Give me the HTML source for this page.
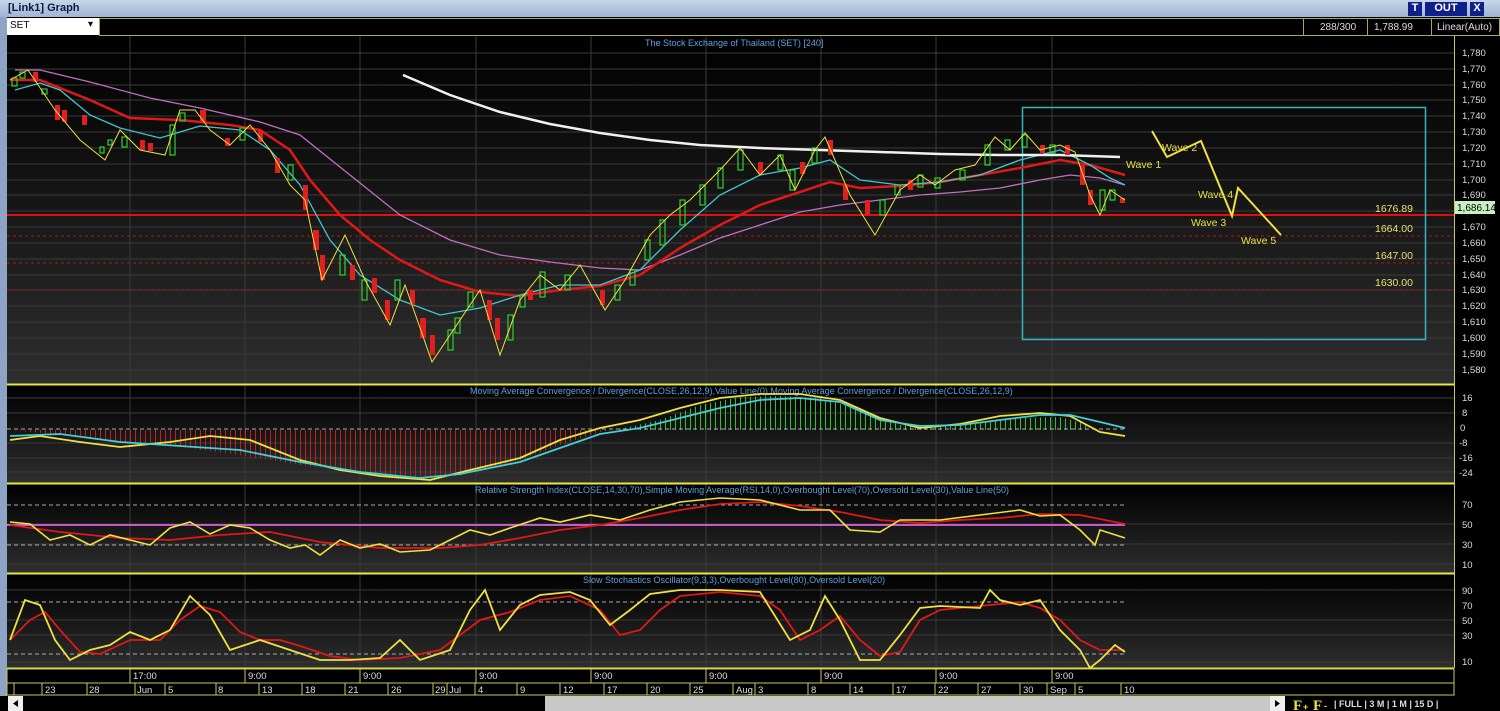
<!DOCTYPE html>
<html><head><meta charset="utf-8"><style>
*{margin:0;padding:0;box-sizing:border-box}
body{width:1500px;height:711px;overflow:hidden;background:#000;font-family:"Liberation Sans",sans-serif;position:relative}
.t{position:absolute;font-size:11px}
</style></head><body>
<div style="position:absolute;left:0;top:0;width:1500px;height:17px;background:linear-gradient(#c7d6ea,#9fb6d3)"></div>
<div class="t" style="left:8px;top:2px;font-weight:bold;color:#0a1a40;font-size:11px">[Link1] Graph</div>
<div style="position:absolute;left:1408px;top:2px;width:14px;height:14px;background:#10208a;color:#fff;font-size:11px;font-weight:bold;text-align:center">T</div>
<div style="position:absolute;left:1425px;top:2px;width:42px;height:14px;background:#10208a;color:#fff;font-size:11px;font-weight:bold;text-align:center">OUT</div>
<div style="position:absolute;left:1470px;top:2px;width:14px;height:14px;background:#10208a;color:#fff;font-size:11px;font-weight:bold;text-align:center">X</div>
<div style="position:absolute;left:0;top:17px;width:7px;height:680px;background:#8ea4c4"></div>
<div style="position:absolute;left:7px;top:18px;width:92px;height:17px;background:#fff;font-size:10px;padding:2px 3px;color:#000">SET<span style="position:absolute;right:6px;top:1px">▾</span></div>
<div style="position:absolute;left:99px;top:18px;width:1401px;height:18px;border:1px solid #a8a860;background:#000"></div>
<div style="position:absolute;left:1303px;top:18px;width:1px;height:18px;background:#a8a860"></div>
<div style="position:absolute;left:1367px;top:18px;width:1px;height:18px;background:#a8a860"></div>
<div style="position:absolute;left:1431px;top:18px;width:1px;height:18px;background:#a8a860"></div>
<div class="t" style="left:1320px;top:22px;color:#ddd;font-size:10px">288/300</div>
<div class="t" style="left:1374px;top:22px;color:#ddd;font-size:10px">1,788.99</div>
<div class="t" style="left:1437px;top:22px;color:#ddd;font-size:10px">Linear(Auto)</div>

<svg style="position:absolute;left:0;top:0" width="1500" height="711" font-family="Liberation Sans, sans-serif">
<defs>
<linearGradient id="g" x1="0" y1="0" x2="0" y2="1"><stop offset="0" stop-color="#000"/><stop offset="1" stop-color="#2e2e2e"/></linearGradient>
<pattern id="pr" width="5" height="10" patternUnits="userSpaceOnUse"><rect x="0" width="1" height="10" fill="#c02020"/></pattern>
<pattern id="pg" width="5" height="10" patternUnits="userSpaceOnUse"><rect x="0" width="1" height="10" fill="#30c030"/></pattern>
</defs>
<rect x="7" y="36" width="1447" height="348" fill="url(#g)"/>
<rect x="7" y="385" width="1447" height="98" fill="url(#g)"/>
<rect x="7" y="484" width="1447" height="89" fill="url(#g)"/>
<rect x="7" y="574" width="1447" height="94" fill="url(#g)"/>
<g stroke="#3a3a3a" stroke-width="1">
<path d="M7 53H1454M7 69H1454M7 85H1454M7 100H1454M7 116H1454M7 132H1454M7 148H1454M7 164H1454M7 180H1454M7 195H1454M7 211H1454M7 227H1454M7 243H1454M7 259H1454M7 275H1454M7 290H1454M7 306H1454M7 322H1454M7 338H1454M7 354H1454M7 370H1454"/>
<path d="M7 398H1454M7 413H1454M7 443H1454M7 458H1454M7 472H1454M7 524H1454M7 544H1454M7 564H1454M7 590H1454M7 620H1454M7 635H1454M7 662H1454"/>
<path d="M130 36V668M245 36V668M360 36V668M476 36V668M591 36V668M706 36V668M821 36V668M936 36V668M1052 36V668"/>
</g>
<g stroke="#e8e840" stroke-width="2"><path d="M7 384.5H1454M7 483.5H1454M7 573.5H1454M7 668.5H1454"/></g>
<path d="M1454.5 36V668" stroke="#c8c860"/>
<g fill="#ddd" font-size="9.5">
<text x="1462" y="56">1,780</text><text x="1462" y="72">1,770</text><text x="1462" y="88">1,760</text><text x="1462" y="103">1,750</text><text x="1462" y="119">1,740</text><text x="1462" y="135">1,730</text><text x="1462" y="151">1,720</text><text x="1462" y="167">1,710</text><text x="1462" y="183">1,700</text><text x="1462" y="198">1,690</text><text x="1462" y="230">1,670</text><text x="1462" y="246">1,660</text><text x="1462" y="262">1,650</text><text x="1462" y="278">1,640</text><text x="1462" y="293">1,630</text><text x="1462" y="309">1,620</text><text x="1462" y="325">1,610</text><text x="1462" y="341">1,600</text><text x="1462" y="357">1,590</text><text x="1462" y="373">1,580</text>
<text x="1462" y="401">16</text><text x="1462" y="416">8</text><text x="1460" y="431">0</text><text x="1459" y="446">-8</text><text x="1459" y="461">-16</text><text x="1459" y="476">-24</text>
<text x="1462" y="508">70</text><text x="1462" y="528">50</text><text x="1462" y="548">30</text><text x="1462" y="568">10</text>
<text x="1462" y="594">90</text><text x="1462" y="609">70</text><text x="1462" y="624">50</text><text x="1462" y="639">30</text><text x="1462" y="665">10</text>
</g>
<rect x="1455" y="201" width="40" height="13" fill="#c8f0c0"/><text x="1457" y="211" font-size="10" fill="#000">1,686.14</text>
<g font-size="9" fill="#5aa0e0">
<text x="645" y="46">The Stock Exchange of Thailand (SET) [240]</text>
<text x="470" y="394">Moving Average Convergence / Divergence(CLOSE,26,12,9),Value Line(0),Moving Average Convergence / Divergence(CLOSE,26,12,9)</text>
<text x="475" y="493">Relative Strength Index(CLOSE,14,30,70),Simple Moving Average(RSI,14,0),Overbought Level(70),Oversold Level(30),Value Line(50)</text>
<text x="583" y="583">Slow Stochastics Oscillator(9,3,3),Overbought Level(80),Oversold Level(20)</text>
</g>
<!-- fib lines -->
<path d="M7 215H1454" stroke="#e01010" stroke-width="2"/>
<g stroke="#b01818" stroke-dasharray="3,3"><path d="M7 236H1454M7 263H1454M7 290H1454"/></g>
<g fill="#e8e070" font-size="10.5"><text x="1375" y="212">1676.89</text><text x="1375" y="232">1664.00</text><text x="1375" y="259">1647.00</text><text x="1375" y="286">1630.00</text></g>
<rect x="1022.5" y="107.5" width="403" height="232" fill="none" stroke="#30b8c0" stroke-width="1.5"/>
<!-- MAs -->
<polyline fill="none" stroke="#c070c0" stroke-width="1.3" points="15,70 40,70 90,82 150,98 200,108 260,122 300,135 350,175 400,215 450,240 500,255 550,262 600,268 640,270 680,255 720,238 760,225 800,212 840,205 880,200 920,195 960,192 1000,188 1040,180 1070,175 1100,178 1125,185"/>
<polyline fill="none" stroke="#e01818" stroke-width="2.5" points="10,80 40,80 90,100 130,118 180,120 230,125 260,130 290,150 310,180 340,215 370,240 400,260 440,280 480,292 520,296 560,290 600,286 640,275 680,248 720,225 760,205 800,192 830,182 860,188 900,186 940,182 980,175 1020,168 1060,160 1090,165 1125,175"/>
<polyline fill="none" stroke="#40c8d0" stroke-width="1.3" points="15,90 40,83 60,90 90,115 120,128 160,138 200,126 240,130 270,150 300,185 330,240 360,275 400,300 440,315 480,308 520,295 560,285 600,285 640,270 680,230 720,195 760,175 800,168 830,160 860,180 900,185 940,182 980,175 1020,160 1060,150 1090,165 1110,178 1125,185"/>
<polyline fill="none" stroke="#f0f0f0" stroke-width="2.5" points="403,75 450,95 500,112 550,124 600,133 650,140 700,145 760,148 820,150 880,152 940,154 1000,155 1060,155 1120,157"/>
<!-- candles -->
<g fill="#e02020"><rect x="33" y="72" width="5" height="10"/><rect x="55" y="105" width="5" height="15"/><rect x="62" y="110" width="5" height="12"/><rect x="82" y="115" width="5" height="10"/><rect x="140" y="140" width="5" height="10"/><rect x="148" y="143" width="5" height="8"/><rect x="200" y="110" width="6" height="12"/><rect x="225" y="138" width="5" height="8"/><rect x="258" y="130" width="5" height="12"/><rect x="275" y="158" width="5" height="15"/><rect x="303" y="185" width="5" height="25"/><rect x="313" y="230" width="6" height="20"/><rect x="320" y="255" width="5" height="25"/><rect x="350" y="265" width="5" height="15"/><rect x="372" y="278" width="5" height="15"/><rect x="385" y="300" width="5" height="20"/><rect x="410" y="290" width="5" height="15"/><rect x="420" y="318" width="6" height="20"/><rect x="430" y="335" width="5" height="20"/><rect x="487" y="300" width="5" height="20"/><rect x="495" y="318" width="5" height="22"/><rect x="528" y="290" width="5" height="10"/><rect x="600" y="290" width="5" height="15"/><rect x="758" y="162" width="5" height="12"/><rect x="800" y="162" width="5" height="12"/><rect x="828" y="140" width="5" height="15"/><rect x="843" y="185" width="5" height="15"/><rect x="865" y="200" width="5" height="15"/><rect x="908" y="180" width="5" height="10"/><rect x="1040" y="145" width="5" height="8"/><rect x="1065" y="145" width="5" height="10"/><rect x="1080" y="165" width="5" height="20"/><rect x="1088" y="190" width="5" height="15"/><rect x="1120" y="198" width="5" height="5"/></g>
<g fill="none" stroke="#30d030" stroke-width="1.2"><rect x="12" y="78" width="5" height="8"/><rect x="20" y="72" width="5" height="6"/><rect x="42" y="89" width="5" height="5"/><rect x="100" y="147" width="4" height="6"/><rect x="108" y="140" width="4" height="5"/><rect x="122" y="137" width="5" height="10"/><rect x="170" y="125" width="5" height="30"/><rect x="180" y="113" width="5" height="8"/><rect x="240" y="128" width="5" height="12"/><rect x="288" y="165" width="5" height="15"/><rect x="340" y="255" width="5" height="20"/><rect x="362" y="280" width="5" height="20"/><rect x="395" y="280" width="5" height="20"/><rect x="448" y="330" width="5" height="20"/><rect x="455" y="318" width="5" height="15"/><rect x="468" y="292" width="5" height="15"/><rect x="508" y="315" width="5" height="25"/><rect x="520" y="295" width="5" height="12"/><rect x="540" y="272" width="5" height="25"/><rect x="565" y="275" width="5" height="15"/><rect x="615" y="285" width="5" height="15"/><rect x="630" y="270" width="5" height="15"/><rect x="645" y="240" width="5" height="20"/><rect x="660" y="220" width="5" height="25"/><rect x="680" y="200" width="5" height="25"/><rect x="700" y="185" width="5" height="20"/><rect x="718" y="168" width="5" height="20"/><rect x="738" y="150" width="5" height="20"/><rect x="778" y="155" width="5" height="15"/><rect x="790" y="170" width="5" height="20"/><rect x="812" y="148" width="5" height="15"/><rect x="880" y="200" width="5" height="15"/><rect x="895" y="185" width="5" height="10"/><rect x="918" y="175" width="5" height="12"/><rect x="935" y="178" width="5" height="10"/><rect x="960" y="170" width="5" height="10"/><rect x="985" y="145" width="5" height="20"/><rect x="1005" y="140" width="5" height="10"/><rect x="1022" y="135" width="5" height="12"/><rect x="1050" y="145" width="5" height="8"/><rect x="1100" y="190" width="5" height="20"/><rect x="1110" y="190" width="5" height="10"/></g>
<polyline fill="none" stroke="#f0e040" stroke-width="1" points="10,80 28,70 55,110 80,140 105,160 120,130 140,150 165,155 180,110 195,110 210,130 230,145 250,125 270,150 290,185 305,200 322,280 345,235 365,280 390,325 405,285 432,362 460,320 480,290 500,355 520,300 540,275 560,290 580,265 605,310 625,280 650,235 670,215 690,200 720,170 740,148 760,175 780,155 795,190 815,150 825,137 850,195 875,235 900,190 920,175 935,185 955,170 975,165 995,137 1010,150 1025,133 1040,150 1060,145 1075,152 1090,195 1100,215 1110,190 1125,200"/>
<polyline fill="none" stroke="#f0e040" stroke-width="2" points="1152,131 1167,157 1201,141 1232,216 1238,188 1281,235"/>
<g fill="#e8e040" font-size="10.5"><text x="1126" y="168">Wave 1</text><text x="1162" y="151">Wave 2</text><text x="1191" y="226">Wave 3</text><text x="1198" y="198">Wave 4</text><text x="1241" y="244">Wave 5</text></g>
<!-- MACD -->
<polygon fill="url(#pr)" points="10,430 60,435 120,442 180,447 240,455 300,465 360,472 420,478 460,476 520,460 560,445 600,432 620,429 620,430 10,430"/>
<polygon fill="url(#pg)" points="620,429 660,420 700,405 740,397 780,396 820,398 860,410 900,425 940,427 980,422 1020,418 1060,417 1090,425 1090,430 620,430"/>
<path d="M7 429H1125" stroke="#aaa" stroke-dasharray="4,3"/>
<polyline fill="none" stroke="#f0e040" stroke-width="1.8" points="10,440 40,436 80,442 120,447 170,442 210,436 250,440 300,460 340,470 380,476 430,480 470,470 520,458 560,440 600,428 640,420 680,408 720,398 760,394 800,394 840,400 880,418 920,428 960,424 1000,416 1040,413 1070,416 1100,432 1125,436"/>
<polyline fill="none" stroke="#40d0d8" stroke-width="1.8" points="10,436 60,434 120,442 180,446 240,450 300,462 360,472 420,478 460,474 520,462 560,448 600,434 640,428 680,418 720,408 760,400 800,398 840,402 880,420 920,426 960,425 1000,420 1040,415 1070,415 1100,422 1125,428"/>
<!-- RSI -->
<g stroke="#aaa" stroke-dasharray="4,3"><path d="M7 505H1125M7 545H1125"/></g>
<path d="M7 525H1125" stroke="#e060e0" stroke-width="1.8"/>
<polyline fill="none" stroke="#e01818" stroke-width="1.8" points="10,525 60,532 120,538 170,540 220,535 270,532 320,542 380,548 440,548 480,545 520,538 560,530 600,525 640,518 680,510 720,504 760,502 800,506 840,512 880,520 920,523 960,520 1000,518 1040,514 1080,515 1125,524"/>
<polyline fill="none" stroke="#f0e040" stroke-width="1.6" points="10,522 30,524 50,540 70,535 90,545 110,535 130,540 150,545 170,528 190,522 210,534 230,525 250,528 270,540 290,548 305,545 320,555 340,540 360,548 380,544 400,552 430,550 450,540 470,530 490,535 510,528 540,518 560,522 590,515 620,520 650,510 680,502 720,498 760,500 800,510 830,510 850,530 880,532 900,520 940,520 980,515 1020,510 1040,516 1060,515 1080,530 1095,545 1100,530 1125,538"/>
<!-- Stoch -->
<g stroke="#aaa" stroke-dasharray="4,3"><path d="M7 602H1125M7 654H1125"/></g>
<polyline fill="none" stroke="#e01818" stroke-width="1.8" points="10,640 30,620 45,612 60,630 80,652 100,654 130,640 160,640 180,620 200,606 220,612 240,632 260,640 280,640 300,646 330,656 360,660 400,658 440,650 460,635 480,620 510,612 540,600 570,596 600,610 620,635 640,630 660,610 680,596 720,592 760,596 780,610 800,640 820,630 840,616 860,640 880,656 900,652 920,620 940,610 980,606 1020,602 1040,608 1060,620 1080,640 1100,650 1125,650"/>
<polyline fill="none" stroke="#f0e040" stroke-width="1.8" points="10,640 25,600 40,605 55,640 70,660 90,650 110,645 130,632 150,640 170,630 190,596 210,615 230,650 260,640 290,650 320,660 350,660 380,658 400,640 420,660 450,650 470,610 485,590 500,630 520,605 540,595 570,592 590,600 610,625 630,610 650,594 680,590 720,590 760,592 790,640 810,630 825,596 840,620 860,660 880,660 900,635 920,608 940,606 980,608 990,590 1000,600 1020,605 1040,600 1060,630 1080,650 1090,668 1100,660 1115,645 1125,652"/>
<!-- time axis -->
<rect x="7" y="669" width="1447" height="14" fill="#000" stroke="#c8c860"/>
<rect x="7" y="683" width="1447" height="12" fill="#000" stroke="#c8c860"/>
<g stroke="#c8c860"><path d="M130 669V683M245 669V683M360 669V683M476 669V683M591 669V683M706 669V683M821 669V683M936 669V683M1052 669V683"/>
<path d="M14 683V695M42 683V695M87 683V695M135 683V695M165 683V695M216 683V695M259 683V695M302 683V695M345 683V695M388 683V695M433 683V695M447 683V695M475 683V695M517 683V695M560 683V695M604 683V695M647 683V695M690 683V695M733 683V695M755 683V695M808 683V695M850 683V695M893 683V695M935 683V695M978 683V695M1020 683V695M1047 683V695M1075 683V695M1121 683V695"/></g>
<g fill="#ddd" font-size="9.5">
<text x="133" y="679">17:00</text><text x="248" y="679">9:00</text><text x="363" y="679">9:00</text><text x="479" y="679">9:00</text><text x="594" y="679">9:00</text><text x="709" y="679">9:00</text><text x="824" y="679">9:00</text><text x="939" y="679">9:00</text><text x="1055" y="679">9:00</text>
<text x="45" y="693">23</text><text x="89" y="693">28</text><text x="137" y="693">Jun</text><text x="168" y="693">5</text><text x="218" y="693">8</text><text x="262" y="693">13</text><text x="305" y="693">18</text><text x="348" y="693">21</text><text x="391" y="693">26</text><text x="435" y="693">29</text><text x="449" y="693">Jul</text><text x="478" y="693">4</text><text x="520" y="693">9</text><text x="563" y="693">12</text><text x="607" y="693">17</text><text x="650" y="693">20</text><text x="693" y="693">25</text><text x="736" y="693">Aug</text><text x="758" y="693">3</text><text x="811" y="693">8</text><text x="853" y="693">14</text><text x="896" y="693">17</text><text x="938" y="693">22</text><text x="981" y="693">27</text><text x="1023" y="693">30</text><text x="1050" y="693">Sep</text><text x="1078" y="693">5</text><text x="1124" y="693">10</text>
</g>
<!-- scrollbar -->
<rect x="0" y="696" width="1500" height="15" fill="#000"/>
<rect x="8" y="696" width="15" height="15" fill="#eee"/><path d="M18 700L13 703.5L18 707Z" fill="#000"/>
<rect x="23" y="696" width="145" height="15" fill="#000"/>
<rect x="545" y="696" width="725" height="15" fill="#c8c8c8"/>
<rect x="1270" y="696" width="15" height="15" fill="#eee"/><path d="M1275 700L1280 703.5L1275 707Z" fill="#000"/>
<g fill="#f0e040" font-family="Liberation Serif, serif" font-weight="bold" font-size="15"><text x="1293" y="710">F</text><text x="1313" y="710">F</text></g>
<g fill="#f0e040" font-size="9" font-weight="bold"><text x="1303" y="710">+</text><text x="1324" y="709">-</text></g>
<g fill="#ddd" font-size="9" font-weight="bold"><text x="1334" y="707">|  FULL  |  3 M  |  1 M  |  15 D  |</text></g>
</svg>
</body></html>
